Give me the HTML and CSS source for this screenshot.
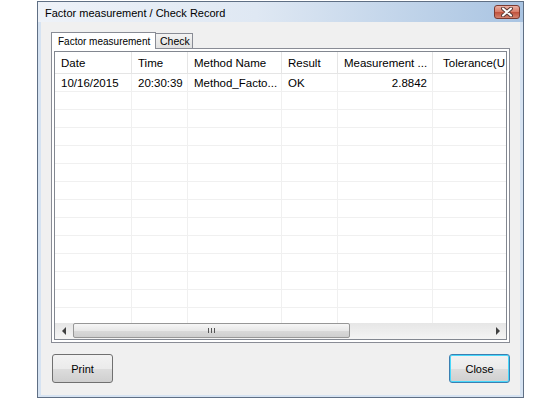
FILE: index.html
```html
<!DOCTYPE html>
<html>

<head>
	<title>
		Factor measurement / Check Record
	</title>

	<link rel="stylesheet" href="styles.css">

</head>

<body>
	<div class="window">
		<div class="titlebar">
			<span class="title">Factor measurement / Check Record</span>
			<div class="close-x">
				<svg width="12" height="10" viewBox="0 0 12 10">
					<path d="M2 1.5 L10 8.5 M10 1.5 L2 8.5" stroke="#5a3a36" stroke-width="4" stroke-linecap="round" />
					<path d="M2 1.5 L10 8.5 M10 1.5 L2 8.5" stroke="#ffffff" stroke-width="2" stroke-linecap="round" />
				</svg>
			</div>
		</div>

		<div class="client">
			<div class="tabs">
				<div class="tab active">Factor measurement</div>
				<div class="tab">Check</div>
			</div>

			<div class="panel">
				<div class="list">
					<div class="grid">
						<div class="row head">
							<div class="cell c-date">Date</div>
							<div class="cell c-time">Time</div>
							<div class="cell c-method">Method Name</div>
							<div class="cell c-result">Result</div>
							<div class="cell c-meas">Measurement ...</div>
							<div class="cell c-tol">Tolerance(U</div>
						</div>
						<div class="row">
							<div class="cell c-date">10/16/2015</div>
							<div class="cell c-time">20:30:39</div>
							<div class="cell c-method">Method_Facto...</div>
							<div class="cell c-result">OK</div>
							<div class="cell c-meas num">2.8842</div>
							<div class="cell c-tol"></div>
						</div>
						<div class="row"><div class="cell c-date"></div><div class="cell c-time"></div><div class="cell c-method"></div><div class="cell c-result"></div><div class="cell c-meas"></div><div class="cell c-tol"></div></div>
						<div class="row"><div class="cell c-date"></div><div class="cell c-time"></div><div class="cell c-method"></div><div class="cell c-result"></div><div class="cell c-meas"></div><div class="cell c-tol"></div></div>
						<div class="row"><div class="cell c-date"></div><div class="cell c-time"></div><div class="cell c-method"></div><div class="cell c-result"></div><div class="cell c-meas"></div><div class="cell c-tol"></div></div>
						<div class="row"><div class="cell c-date"></div><div class="cell c-time"></div><div class="cell c-method"></div><div class="cell c-result"></div><div class="cell c-meas"></div><div class="cell c-tol"></div></div>
						<div class="row"><div class="cell c-date"></div><div class="cell c-time"></div><div class="cell c-method"></div><div class="cell c-result"></div><div class="cell c-meas"></div><div class="cell c-tol"></div></div>
						<div class="row"><div class="cell c-date"></div><div class="cell c-time"></div><div class="cell c-method"></div><div class="cell c-result"></div><div class="cell c-meas"></div><div class="cell c-tol"></div></div>
						<div class="row"><div class="cell c-date"></div><div class="cell c-time"></div><div class="cell c-method"></div><div class="cell c-result"></div><div class="cell c-meas"></div><div class="cell c-tol"></div></div>
						<div class="row"><div class="cell c-date"></div><div class="cell c-time"></div><div class="cell c-method"></div><div class="cell c-result"></div><div class="cell c-meas"></div><div class="cell c-tol"></div></div>
						<div class="row"><div class="cell c-date"></div><div class="cell c-time"></div><div class="cell c-method"></div><div class="cell c-result"></div><div class="cell c-meas"></div><div class="cell c-tol"></div></div>
						<div class="row"><div class="cell c-date"></div><div class="cell c-time"></div><div class="cell c-method"></div><div class="cell c-result"></div><div class="cell c-meas"></div><div class="cell c-tol"></div></div>
						<div class="row"><div class="cell c-date"></div><div class="cell c-time"></div><div class="cell c-method"></div><div class="cell c-result"></div><div class="cell c-meas"></div><div class="cell c-tol"></div></div>
						<div class="row"><div class="cell c-date"></div><div class="cell c-time"></div><div class="cell c-method"></div><div class="cell c-result"></div><div class="cell c-meas"></div><div class="cell c-tol"></div></div>
						<div class="row"><div class="cell c-date"></div><div class="cell c-time"></div><div class="cell c-method"></div><div class="cell c-result"></div><div class="cell c-meas"></div><div class="cell c-tol"></div></div>
					</div>

					<div class="hscroll">
						<div class="arrow"><span class="tri-left"></span></div>
						<div class="track">
							<div class="thumb"><span class="grip"></span></div>
						</div>
						<div class="arrow"><span class="tri-right"></span></div>
					</div>
				</div>
			</div>

			<div class="buttons">
				<button class="btn">Print</button>
				<button class="btn default">Close</button>
			</div>
		</div>
	</div>
</body>

</html>
```

FILE: styles.css
```css
body {
	margin: 0;
	background: #ffffff;
	font-family: "Liberation Sans", Arial, sans-serif;
	color: #000000;
}

.window {
	margin: 1px 0 0 37px;
	width: 487px;
	height: 397px;
	box-sizing: border-box;
	border: 1px solid #5f6f84;
	background: #d6e3f2;
	display: flex;
	flex-direction: column;
}

.titlebar {
	height: 20px;
	flex: none;
	display: flex;
	align-items: flex-start;
	background: linear-gradient(to right, #eef2f8 0%, #dfe8f3 45%, #a9c4e2 100%);
}

.title {
	padding: 4px 0 0 7px;
	font-size: 11px;
	line-height: 14px;
	flex: 1;
}

.close-x {
	width: 24px;
	height: 12px;
	margin: 3px 3px 0 0;
	border: 1px solid #7a3a31;
	border-radius: 3px;
	background: linear-gradient(#eab0a4 0%, #d77a66 50%, #c0503b 51%, #d3826f 100%);
	display: flex;
	align-items: center;
	justify-content: center;
}

.client {
	flex: 1;
	margin: 0 3px 2px 3px;
	background: #f0f0f0;
	padding: 10px 10px 0 10px;
	display: flex;
	flex-direction: column;
}

/* tab strip */

.tabs {
	display: flex;
	align-items: flex-end;
	height: 16px;
	position: relative;
	z-index: 1;
}

.tab {
	box-sizing: border-box;
	width: 37px;
	font-size: 10.5px;
	line-height: 13px;
	height: 15px;
	padding: 1px 0 0 4px;
	border: 1px solid #898c95;
	border-left: none;
	border-bottom: none;
	white-space: nowrap;
	background: linear-gradient(#f3f3f3, #e1e1e1);
}

.tab.active {
	width: 105px;
	height: 17px;
	margin-bottom: -1px;
	padding: 2px 0 0 6px;
	border-left: 1px solid #898c95;
	font-size: 10px;
	background: #ffffff;
}

.panel {
	height: 295px;
	box-sizing: border-box;
	border: 1px solid #898c95;
	background: #ffffff;
	padding: 2px;
}

/* list view */

.list {
	height: 100%;
	box-sizing: border-box;
	border: 1px solid #828790;
	display: flex;
	flex-direction: column;
}

.grid {
	flex: 1;
	overflow: hidden;
}

.row {
	display: flex;
	height: 18px;
	box-sizing: border-box;
	border-bottom: 1px solid #f0f0f0;
	font-size: 11.5px;
	line-height: 18px;
}

.row.head {
	height: 22px;
	line-height: 23px;
	border-bottom: 1px solid #e5e5e5;
}

.cell {
	flex: none;
	box-sizing: border-box;
	padding-left: 6px;
	border-right: 1px solid #f0f0f0;
	white-space: nowrap;
	overflow: hidden;
}

.row.head .cell {
	border-right-color: #e5e5e5;
}

.c-date {
	width: 77px;
}

.c-time {
	width: 56px;
}

.c-method {
	width: 94px;
}

.c-result {
	width: 56px;
}

.c-meas {
	width: 95px;
}

.c-tol {
	width: 110px;
	padding-left: 10px;
}

.num {
	text-align: right;
	padding-right: 5px;
}

/* horizontal scroll bar */

.hscroll {
	height: 16px;
	flex: none;
	display: flex;
	background: linear-gradient(#e6e6e6, #f4f4f4);
}

.arrow {
	width: 17px;
	display: flex;
	align-items: center;
	justify-content: center;
}

.tri-left {
	border-right: 4px solid #404040;
	border-top: 4px solid transparent;
	border-bottom: 4px solid transparent;
}

.tri-right {
	border-left: 4px solid #404040;
	border-top: 4px solid transparent;
	border-bottom: 4px solid transparent;
}

.track {
	flex: 1;
	padding: 0 1px;
}

.thumb {
	width: 277px;
	height: 15px;
	box-sizing: border-box;
	border: 1px solid #979797;
	border-radius: 2px;
	background: linear-gradient(#f6f6f6 0%, #e8e8e8 50%, #d9d9d9 51%, #cfcfcf 100%);
	display: flex;
	align-items: center;
	justify-content: center;
}

.grip {
	width: 7px;
	height: 5px;
	background: repeating-linear-gradient(to right, #555555 0 1px, transparent 1px 3px);
}

/* dialog buttons */

.buttons {
	display: flex;
	justify-content: space-between;
	margin: 11px 0 0 1px;
}

.btn {
	width: 61px;
	height: 29px;
	border: 1px solid #707070;
	border-radius: 3px;
	background: linear-gradient(#f2f2f2 0%, #ebebeb 50%, #dddddd 51%, #cfcfcf 100%);
	font-family: "Liberation Sans", Arial, sans-serif;
	font-size: 11px;
	color: #000000;
	padding: 0;
}

.btn.default {
	border-color: #3c7fb1;
	box-shadow: inset 0 0 0 1px #48d8fb;
}
```
